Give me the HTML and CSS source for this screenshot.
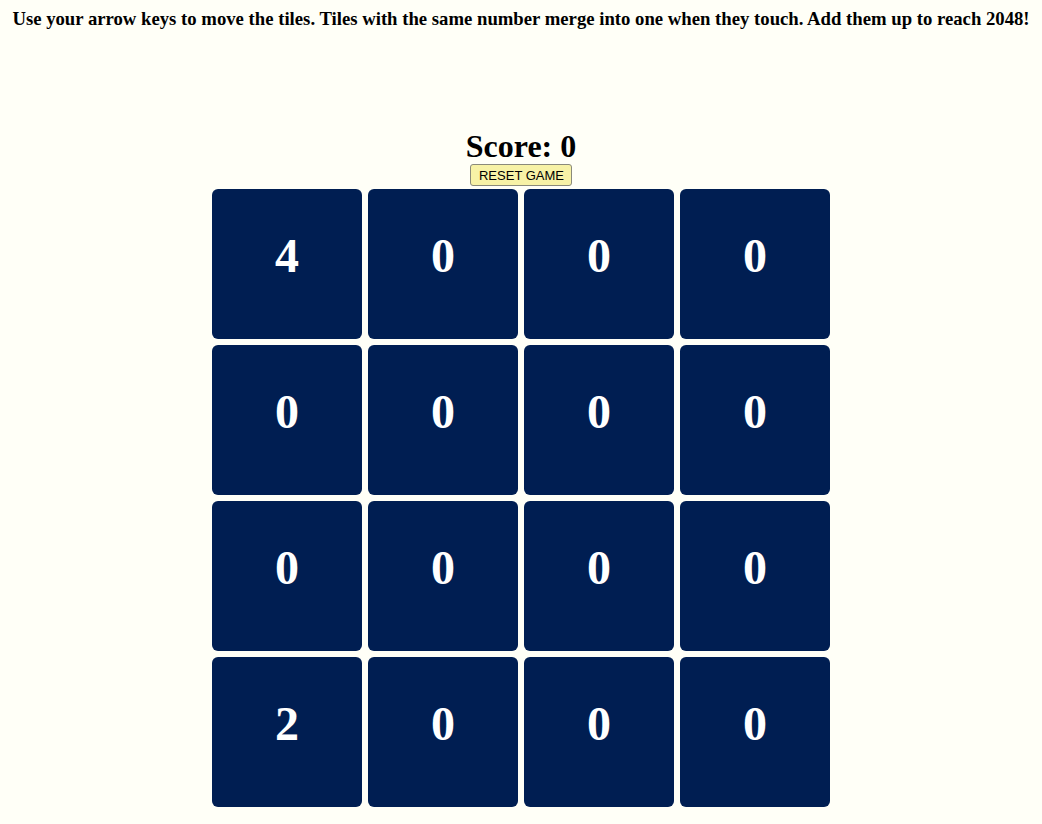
FILE: index.html
```html
<!DOCTYPE html>
<html>
<head>
<meta charset="utf-8">
<link rel="stylesheet" href="styles.css">
</head>
<body>
<h3 class="instructions">Use your arrow keys to move the tiles. Tiles with the same number merge into one when they touch. Add them up to reach 2048!</h3>
<main class="game">
  <h1 class="score">Score: 0</h1>
  <button class="reset">RESET GAME</button>
  <div class="board">
    <div class="tile">4</div><div class="tile">0</div><div class="tile">0</div><div class="tile">0</div>
    <div class="tile">0</div><div class="tile">0</div><div class="tile">0</div><div class="tile">0</div>
    <div class="tile">0</div><div class="tile">0</div><div class="tile">0</div><div class="tile">0</div>
    <div class="tile">2</div><div class="tile">0</div><div class="tile">0</div><div class="tile">0</div>
  </div>
</main>
</body>
</html>
```
FILE: styles.css
```css
body {
  margin: 8px;
  background: #fffff7;
  font-family: "Liberation Serif", "Times New Roman", serif;
  color: #000;
}
.instructions {
  margin: 0;
  text-align: center;
  font-size: 18.72px;
  font-weight: bold;
}
.game {
  display: flex;
  flex-direction: column;
  align-items: center;
  margin-top: 98px;
}
.score {
  margin: 0;
  font-size: 32px;
  line-height: 37px;
}
.reset {
  margin-top: -1px;
  font-family: "Liberation Sans", Arial, sans-serif;
  font-size: 13px;
  padding: 3px 7px 2px 8px;
  background: #f7f2a6;
  border: 1px solid #8a8a7a;
  border-radius: 3px;
  color: #000;
}
.board {
  margin-top: 3px;
  display: grid;
  grid-template-columns: repeat(4, 150px);
  grid-auto-rows: 150px;
  gap: 6px;
}
.tile {
  background: #001e52;
  border-radius: 6px;
  color: #fff;
  font-size: 48px;
  font-weight: bold;
  display: flex;
  align-items: center;
  justify-content: center;
  padding-bottom: 18px;
  box-sizing: border-box;
}
```
